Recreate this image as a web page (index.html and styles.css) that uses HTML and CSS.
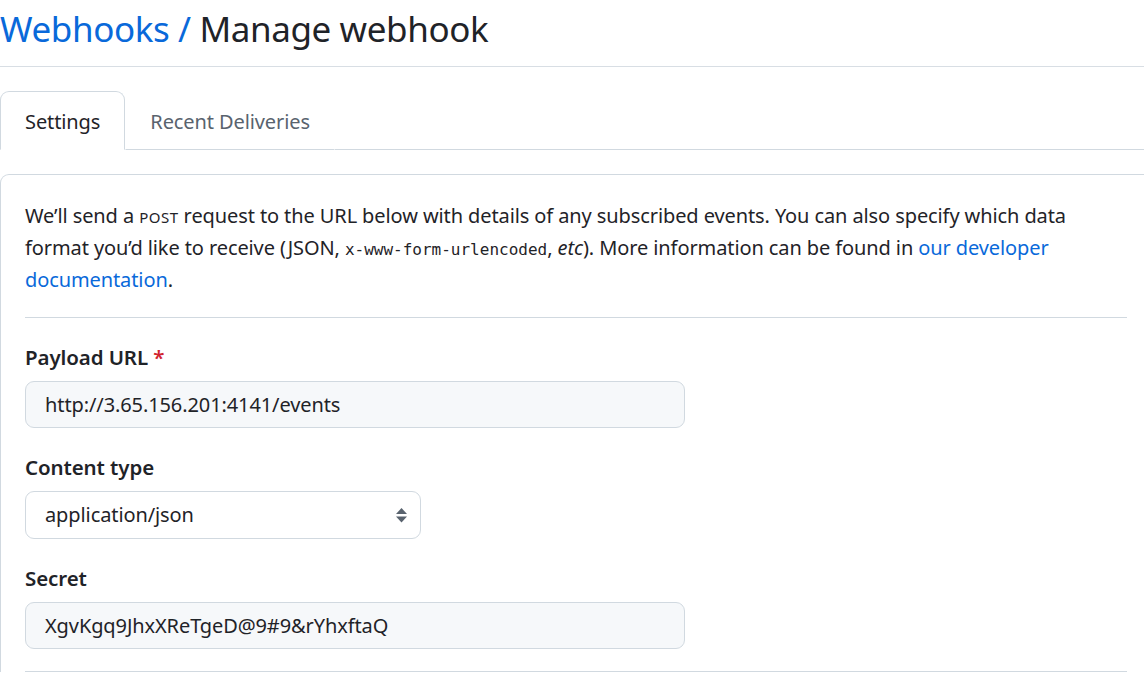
FILE: index.html
```html
<!DOCTYPE html>
<html lang="en">
<head>
<meta charset="utf-8">
<title>Manage webhook</title>
<link rel="stylesheet" href="styles.css">
</head>
<body>
<div class="page">
  <div class="subhead">
    <h1 class="subhead-title"><a class="crumb" href="#">Webhooks</a> <span class="sep">/</span> Manage webhook</h1>
  </div>
  <nav class="tabs">
    <a class="tab selected" href="#">Settings</a>
    <a class="tab" href="#">Recent Deliveries</a>
    <div class="tab-fill"></div>
  </nav>
  <div class="box">
    <p class="intro">We’ll send a <span class="smallcaps">POST</span> request to the URL below with details of any subscribed events. You can also specify which data format you’d like to receive (JSON, <code>x-www-form-urlencoded</code>, <em>etc</em>). More information can be found in <a href="#">our developer documentation</a>.</p>
    <hr class="divider">
    <div class="field">
      <label class="label">Payload URL <span class="req">*</span></label>
      <div class="input url">http://3.65.156.201:4141/events</div>
    </div>
    <div class="field">
      <label class="label">Content type</label>
      <div class="select">
        <span>application/json</span>
        <svg class="caret" width="13" height="18" viewBox="0 0 13 18"><path d="M6.5 2 L12 8 H1 Z" fill="#59636e"/><path d="M6.5 16.5 L12 10.5 H1 Z" fill="#59636e"/></svg>
      </div>
    </div>
    <div class="field">
      <label class="label">Secret</label>
      <div class="input url">XgvKgq9JhxXReTgeD@9#9&amp;rYhxftaQ</div>
    </div>
    <hr class="divider end">
  </div>
</div>
</body>
</html>
```
FILE: styles.css
```css
html, body {
  margin: 0;
  padding: 0;
  overflow: hidden;
  background: #ffffff;
}
body {
  font-family: "Noto Sans", "Open Sans", sans-serif;
  color: #1f2328;
  font-size: 20px;
  letter-spacing: -0.1px;
  line-height: 1.5;
}
.page {
  width: 1153px;
}
.subhead {
  border-bottom: 1px solid #d8dee4;
  height: 67px;
  box-sizing: border-box;
}
.subhead-title {
  margin: 0;
  font-weight: 400;
  font-size: 35px;
  line-height: 58px;
  letter-spacing: -0.4px;
}
.crumb, .sep {
  color: #0969da;
  text-decoration: none;
}
.tabs {
  display: flex;
  margin-top: 24px;
  height: 59px;
}
.tab {
  display: flex;
  align-items: center;
  padding: 3px 24px 0 24px;
  color: #59636e;
  text-decoration: none;
  border: 1px solid transparent;
  border-bottom: 1px solid #d1d9e0;
  border-radius: 9px 9px 0 0;
}
.tab.selected {
  color: #1f2328;
  border-color: #d1d9e0;
  border-bottom-color: transparent;
}
.tab-fill {
  flex: 1;
  border-bottom: 1px solid #d1d9e0;
}
.box {
  margin-top: 24px;
  border: 1px solid #d1d9e0;
  border-bottom: none;
  border-radius: 9px 9px 0 0;
  padding: 25px 25px 0 24px;
}
.intro {
  margin: 0 0 21px;
  line-height: 32px;
}
.intro a {
  color: #0969da;
  text-decoration: none;
}
.smallcaps {
  font-size: 15px;
  letter-spacing: 0.5px;
  line-height: 1;
}
code {
  font-family: "DejaVu Sans Mono", "Liberation Mono", monospace;
  font-size: 16px;
  letter-spacing: 0;
  line-height: 1;
}
.divider {
  margin: 0;
  border: none;
  border-top: 1px solid #d1d9e0;
  height: 0;
}
.divider.end {
  margin-top: 22px;
}
.field {
  margin-top: 24px;
}
.label {
  display: block;
  font-weight: 600;
  margin-bottom: 8px;
  line-height: 31px;
  font-size: 20.5px;
}
.req {
  color: #d1242f;
}
.input {
  width: 660px;
  height: 47px;
  box-sizing: border-box;
  border: 1px solid #d1d9e0;
  border-radius: 9px;
  background: #f6f8fa;
  padding: 0 19px;
  display: flex;
  align-items: center;
}
.select {
  width: 396px;
  height: 48px;
  box-sizing: border-box;
  border: 1px solid #d1d9e0;
  border-radius: 9px;
  background: #ffffff;
  padding: 0 12px 0 19px;
  display: flex;
  align-items: center;
  justify-content: space-between;
}
```
